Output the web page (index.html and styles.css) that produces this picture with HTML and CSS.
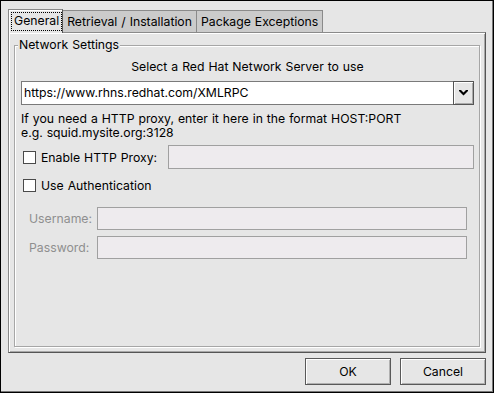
FILE: index.html
```html
<!DOCTYPE html>
<html lang="en">
<head>
  <meta charset="UTF-8">
  <title>Network Settings</title>
  <link rel="stylesheet" href="styles.css">
</head>
<body>

  <div class="window">
    <div class="tabs">
      <div class="tab active"><span class="focus">General</span></div>
      <div class="tab">Retrieval / Installation</div>
      <div class="tab">Package Exceptions</div>
    </div>

    <div class="notebook">
      <fieldset class="frame">
        <legend>Network Settings</legend>

        <div class="center-label">Select a Red Hat Network Server to use</div>

        <div class="combo">
          <div class="combo-entry">https://www.rhns.redhat.com/XMLRPC</div>
          <div class="combo-button">
            <svg width="9" height="6" viewBox="0 0 9 6">
              <path d="M0 0 L2 0 L4.5 2.5 L7 0 L9 0 L9 1 L4.5 5.5 L0 1 Z" fill="#000"/>
            </svg>
          </div>
        </div>

        <p class="hint">If you need a HTTP proxy, enter it here in the format HOST:PORT<br>e.g. squid.mysite.org:3128</p>

        <div class="row proxy-row">
          <span class="check"></span>
          <span class="check-label">Enable HTTP Proxy:</span>
          <div class="entry"></div>
        </div>

        <div class="row auth-row">
          <span class="check"></span>
          <span class="check-label">Use Authentication</span>
        </div>

        <div class="auth-grid">
          <label>Username:</label>
          <div class="entry"></div>
          <label>Password:</label>
          <div class="entry"></div>
        </div>
      </fieldset>
    </div>

    <div class="buttons">
      <button>OK</button>
      <button>Cancel</button>
    </div>
  </div>

</body>
</html>
```

FILE: styles.css
```css
body {
  margin: 0;
  font-family: 'Inter', 'DejaVu Sans', sans-serif;
  font-size: 12.25px;
  word-spacing: 0.5px;
  color: #000;
  background-color: #e6e6e6;
}

.window {
  width: 494px;
  height: 393px;
  box-sizing: border-box;
  border: 1px solid #000;
  box-shadow: inset -1px -1px 0 #777;
  background-color: #e6e6e6;
  padding: 8px 7px 0 7px;
}

/* tabs */

.tabs {
  display: flex;
  align-items: flex-end;
  height: 23px;
  position: relative;
  z-index: 1;
}

.tab {
  height: 22px;
  box-sizing: border-box;
  padding: 3px 4px 0 4px;
  background-color: #cbcbcb;
  border: 1px solid #8a8a8a;
  border-bottom: none;
  border-left: none;
  line-height: 15px;
  white-space: nowrap;
}

.tab.active {
  height: 24px;
  padding: 2px 0 0 2px;
  margin-bottom: -1px;
  background-color: #e6e6e6;
  border-left: 1px solid #8a8a8a;
  border-right: 1px solid #555;
  box-shadow: inset 1px 1px 0 #fff;
}

.focus {
  display: inline-block;
  padding: 1px 3px 2px 3px;
  outline: 1px dotted #000;
  outline-offset: -1px;
  line-height: 16px;
}

/* notebook page */

.notebook {
  height: 321px;
  box-sizing: border-box;
  border: 1px solid #8a8a8a;
  border-right-color: #555;
  border-bottom-color: #555;
  box-shadow: inset 1px 1px 0 #fff, inset -1px -1px 0 #a8a8a8;
  padding: 5px;
  display: flex;
  flex-direction: column;
}

.frame {
  flex: 1;
  margin: 0;
  padding: 8px 5px 0 6px;
  border: 1px solid #a6a6a6;
  box-shadow: inset 1px 1px 0 #fff, 1px 1px 0 #fff;
  min-width: 0;
}

.frame legend {
  padding: 0 1px;
  margin-left: -3px;
  line-height: 14px;
  background-color: #e6e6e6;
}

.center-label {
  text-align: center;
  line-height: 14px;
}

/* combo box */

.combo {
  display: flex;
  height: 24px;
  margin-top: 7px;
}

.combo-entry {
  flex: 1;
  background-color: #fff;
  border: 1px solid #7a7a7a;
  border-right: none;
  padding: 0 2px;
  line-height: 22px;
}

.combo-button {
  width: 21px;
  box-sizing: border-box;
  border: 1px solid #555;
  background-color: #e6e6e6;
  box-shadow: inset 1px 1px 0 #fff, inset -1px -1px 0 #aaa;
  display: flex;
  align-items: center;
  justify-content: center;
}

.hint {
  margin: 7px 0 0 0;
  line-height: 14px;
}

/* rows */

.row {
  display: flex;
  align-items: center;
}

.proxy-row {
  height: 24px;
  margin-top: 5px;
}

.proxy-row .check-label {
  margin-right: 11px;
}

.auth-row {
  height: 14px;
  margin-top: 9px;
}

.check {
  width: 13px;
  height: 13px;
  box-sizing: border-box;
  margin-left: 2px;
  border: 1px solid #4a4a4a;
  background-color: #fff;
}

.check-label {
  margin-left: 5px;
  margin-right: 7px;
  white-space: nowrap;
}

.entry {
  flex: 1;
  height: 24px;
  box-sizing: border-box;
  border: 1px solid #a0a0a0;
  background-color: #eeebee;
}

.auth-grid {
  display: grid;
  grid-template-columns: 68px 1fr;
  row-gap: 6px;
  margin: 15px 7px 0 8px;
  align-items: center;
}

.auth-grid label {
  color: #8f8f8f;
}

.auth-grid .entry {
  height: 23px;
}

/* dialog buttons */

.buttons {
  display: flex;
  justify-content: flex-end;
  gap: 9px;
  margin-top: 5px;
}

button {
  width: 86px;
  height: 27px;
  font-family: 'Inter', 'DejaVu Sans', sans-serif;
  font-size: 12.25px;
  word-spacing: 0.5px;
  color: #000;
  background-color: #e6e6e6;
  border: 1px solid #595959;
  box-shadow: inset 1px 1px 0 #fff, inset -1px -1px 0 #b0b0b0;
  padding: 0;
}
```
